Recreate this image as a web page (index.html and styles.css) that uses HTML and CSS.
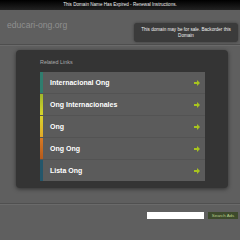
FILE: index.html
```html
<!DOCTYPE html>
<html lang="en">
<head>
    <meta charset="UTF-8">
    <title>educari-ong.org</title>
    <link rel="stylesheet" href="styles.css">
</head>
<body>
    <div class="topbar">This Domain Name Has Expired - Renewal Instructions.</div>

    <div class="header">
        <div class="domain">educari-ong.org</div>
        <div class="sale">This domain may be for sale. Backorder this Domain</div>
    </div>

    <div class="main_box">
        <div class="related">Related Links</div>
        <ul class="links">
            <li class="c1"><span>Internacional Ong</span><i class="arrow"></i></li>
            <li class="c2"><span>Ong Internacionales</span><i class="arrow"></i></li>
            <li class="c3"><span>Ong</span><i class="arrow"></i></li>
            <li class="c4"><span>Ong Ong</span><i class="arrow"></i></li>
            <li class="c5"><span>Lista Ong</span><i class="arrow"></i></li>
        </ul>
    </div>

    <div class="footer">
        <input type="text" class="search_input">
        <button class="search_btn">Search Ads</button>
    </div>
</body>
</html>
```

FILE: styles.css
```css
body {
    font-family: 'Liberation Sans', Arial, sans-serif;
    margin: 0;
    background-color: #5f5f5f;
    color: #fff;
}

.topbar {
    height: 10px;
    line-height: 10px;
    background: linear-gradient(#000, #222);
    font-size: 4.6px;
    text-align: center;
    color: #eee;
}

.header {
    height: 34px;
    display: flex;
    justify-content: space-between;
    align-items: flex-start;
    border-bottom: 1px solid #4e4e4e;
    box-shadow: 0 1px 0 #6a6a6a;
}

.domain {
    margin: 10px 0 0 7px;
    font-size: 8.6px;
    color: #8f8f8f;
}

.sale {
    margin: 13px 2px 0 0;
    width: 104px;
    height: 19px;
    box-sizing: border-box;
    padding: 4px 6px 0;
    background-color: #3b3b3b;
    border-radius: 3px;
    box-shadow: 0 0 3px rgba(0, 0, 0, 0.4);
    font-size: 4.6px;
    line-height: 5.5px;
    text-align: center;
    color: #f0f0f0;
}

.main_box {
    margin: 5px 12px 0 16px;
    height: 138px;
    box-sizing: border-box;
    padding: 9px 23px 0 24px;
    background-color: #343434;
    border-radius: 4px;
    box-shadow: 0 1px 4px rgba(0, 0, 0, 0.5);
}

.related {
    font-size: 5.4px;
    color: #a9a9a9;
    height: 13px;
}

.links {
    list-style-type: none;
    margin: 0;
    padding: 0;
}

.links li {
    height: 21px;
    display: flex;
    align-items: center;
    justify-content: space-between;
    padding: 0 5px 0 10px;
    border-bottom: 1px solid #535353;
    background-color: #5b5b5b;
    background-repeat: no-repeat;
    background-size: 3px 100%;
    font-size: 7px;
    font-weight: bold;
}

.links li:last-child {
    border-bottom: none;
}

.c1 { background-image: linear-gradient(#2f7d6e, #2f7d6e); }
.c2 { background-image: linear-gradient(#9fb52a, #d7d52c); }
.c3 { background-image: linear-gradient(#d9d32c, #e2a828); }
.c4 { background-image: linear-gradient(#d87a24, #b55a1c); }
.c5 { background-image: linear-gradient(#24566a, #24566a); }

.arrow {
    width: 6px;
    height: 6px;
    background:
        linear-gradient(#a8c41e, #a8c41e) 0 2px / 4px 2px no-repeat;
    position: relative;
}

.arrow::after {
    content: '';
    position: absolute;
    right: 0;
    top: 0;
    border-left: 3px solid #a8c41e;
    border-top: 3px solid transparent;
    border-bottom: 3px solid transparent;
}

.footer {
    margin-top: 15px;
    border-top: 1px solid #505050;
    box-shadow: inset 0 1px 0 #6a6a6a;
    height: 36px;
    display: flex;
    align-items: flex-start;
    justify-content: flex-end;
    padding: 8px 2px 0 0;
    box-sizing: border-box;
    gap: 4px;
}

.search_input {
    width: 57px;
    height: 7px;
    padding: 0;
    border: none;
    background-color: #fff;
}

.search_btn {
    height: 7px;
    width: 30px;
    padding: 0;
    border: none;
    background-color: #3d4a2c;
    color: #b9d08a;
    font-family: 'Liberation Sans', Arial, sans-serif;
    font-size: 4.4px;
}
```
